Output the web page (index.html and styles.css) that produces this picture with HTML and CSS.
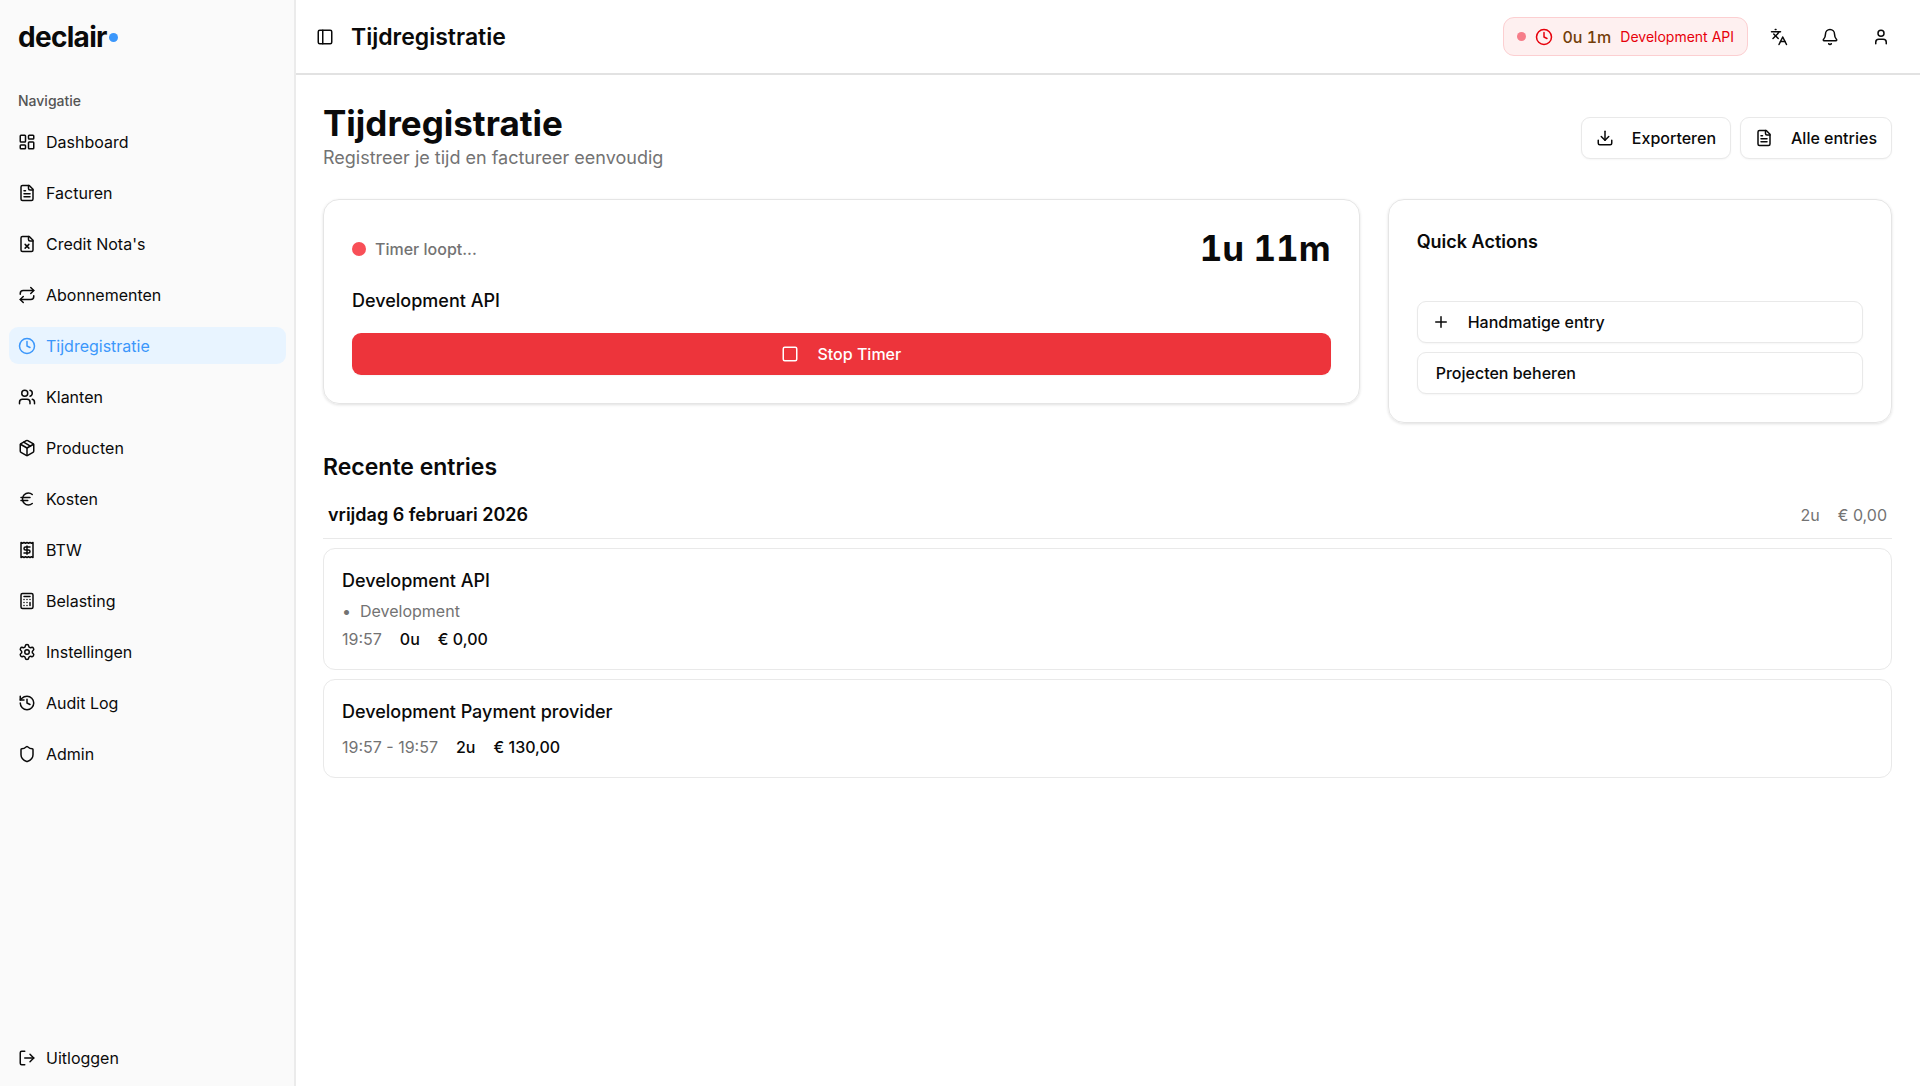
FILE: index.html
```html
<!DOCTYPE html>
<html lang="nl">
<head>
<meta charset="utf-8">
<meta name="viewport" content="width=device-width, initial-scale=1">
<title>Tijdregistratie - declair</title>
<link rel="stylesheet" href="styles.css">
</head>
<body>
<div class="app">
  <aside class="sidebar">
    <a class="logo" href="#">declair<span class="logo-dot"></span></a>
    <p class="nav-label">Navigatie</p>
    <nav class="nav" aria-label="Navigatie">
      <a class="nav-item" href="#"><svg class="icon" viewBox="0 0 24 24"><rect width="7" height="9" x="3" y="3" rx="1"/><rect width="7" height="5" x="14" y="3" rx="1"/><rect width="7" height="9" x="14" y="12" rx="1"/><rect width="7" height="5" x="3" y="16" rx="1"/></svg>Dashboard</a>
      <a class="nav-item" href="#"><svg class="icon" viewBox="0 0 24 24"><path d="M15 2H6a2 2 0 0 0-2 2v16a2 2 0 0 0 2 2h12a2 2 0 0 0 2-2V7Z"/><path d="M14 2v4a2 2 0 0 0 2 2h4"/><path d="M10 9H8"/><path d="M16 13H8"/><path d="M16 17H8"/></svg>Facturen</a>
      <a class="nav-item" href="#"><svg class="icon" viewBox="0 0 24 24"><path d="M15 2H6a2 2 0 0 0-2 2v16a2 2 0 0 0 2 2h12a2 2 0 0 0 2-2V7Z"/><path d="M14 2v4a2 2 0 0 0 2 2h4"/><path d="m14.500 12.500-5 5"/><path d="m9.500 12.500 5 5"/></svg>Credit Nota's</a>
      <a class="nav-item" href="#"><svg class="icon" viewBox="0 0 24 24"><path d="m17 2 4 4-4 4"/><path d="M3 11v-1a4 4 0 0 1 4-4h14"/><path d="m7 22-4-4 4-4"/><path d="M21 13v1a4 4 0 0 1-4 4H3"/></svg>Abonnementen</a>
      <a class="nav-item active" href="#" aria-current="page"><svg class="icon" viewBox="0 0 24 24"><circle cx="12" cy="12" r="10"/><path d="M12 6v6l4 2"/></svg>Tijdregistratie</a>
      <a class="nav-item" href="#"><svg class="icon" viewBox="0 0 24 24"><path d="M16 21v-2a4 4 0 0 0-4-4H6a4 4 0 0 0-4 4v2"/><circle cx="9" cy="7" r="4"/><path d="M22 21v-2a4 4 0 0 0-3-3.870"/><path d="M16 3.130a4 4 0 0 1 0 7.750"/></svg>Klanten</a>
      <a class="nav-item" href="#"><svg class="icon" viewBox="0 0 24 24"><path d="M11 21.730a2 2 0 0 0 2 0l7-4A2 2 0 0 0 21 16V8a2 2 0 0 0-1-1.730l-7-4a2 2 0 0 0-2 0l-7 4A2 2 0 0 0 3 8v8a2 2 0 0 0 1 1.730z"/><path d="M12 22V12"/><path d="M3.300 7 12 12l8.700-5"/><path d="m7.500 4.270 9 5.150"/></svg>Producten</a>
      <a class="nav-item" href="#"><svg class="icon" viewBox="0 0 24 24"><path d="M4 10h12"/><path d="M4 14h9"/><path d="M19 6a7.700 7.700 0 0 0-5.200-2A7.900 7.900 0 0 0 6 12c0 4.400 3.500 8 7.800 8 2 0 3.800-.8 5.200-2"/></svg>Kosten</a>
      <a class="nav-item" href="#"><svg class="icon" viewBox="0 0 24 24"><path d="M4 2v20l2-1 2 1 2-1 2 1 2-1 2 1 2-1 2 1V2l-2 1-2-1-2 1-2-1-2 1-2-1-2 1Z"/><path d="M16 8h-6a2 2 0 1 0 0 4h4a2 2 0 1 1 0 4H8"/><path d="M12 17.500v-11"/></svg>BTW</a>
      <a class="nav-item" href="#"><svg class="icon" viewBox="0 0 24 24"><rect width="16" height="20" x="4" y="2" rx="2"/><path d="M8 6h8M16 14v4M16 10h.01M12 10h.01M8 10h.01M12 14h.01M8 14h.01M12 18h.01M8 18h.01"/></svg>Belasting</a>
      <a class="nav-item" href="#"><svg class="icon" viewBox="0 0 24 24"><path d="M9.671 4.136a2.340 2.340 0 0 1 4.659 0 2.340 2.340 0 0 0 3.319 1.915 2.340 2.340 0 0 1 2.330 4.033 2.340 2.340 0 0 0 0 3.831 2.340 2.340 0 0 1-2.330 4.033 2.340 2.340 0 0 0-3.319 1.915 2.340 2.340 0 0 1-4.659 0 2.340 2.340 0 0 0-3.320-1.915 2.340 2.340 0 0 1-2.330-4.033 2.340 2.340 0 0 0 0-3.831A2.340 2.340 0 0 1 6.350 6.051a2.340 2.340 0 0 0 3.319-1.915"/><circle cx="12" cy="12" r="3"/></svg>Instellingen</a>
      <a class="nav-item" href="#"><svg class="icon" viewBox="0 0 24 24"><path d="M3 12a9 9 0 1 0 9-9 9.750 9.750 0 0 0-6.740 2.740L3 8"/><path d="M3 3v5h5"/><path d="M12 7v5l4 2"/></svg>Audit Log</a>
      <a class="nav-item" href="#"><svg class="icon" viewBox="0 0 24 24"><path d="M20 13c0 5-3.500 7.500-7.660 8.950a1 1 0 0 1-.67-.01C7.500 20.500 4 18 4 13V6a1 1 0 0 1 1-1c2 0 4.500-1.200 6.240-2.720a1.170 1.170 0 0 1 1.520 0C14.510 3.810 17 5 19 5a1 1 0 0 1 1 1z"/></svg>Admin</a>
    </nav>
    <button class="nav-item logout" type="button"><svg class="icon" viewBox="0 0 24 24"><path d="m16 17 5-5-5-5"/><path d="M21 12H9"/><path d="M9 21H5a2 2 0 0 1-2-2V5a2 2 0 0 1 2-2h4"/></svg>Uitloggen</button>
  </aside>

  <div class="page">
    <header class="topbar">
      <button class="icon-button toggle" type="button" aria-label="Zijbalk tonen of verbergen"><svg class="icon" viewBox="0 0 24 24"><rect width="18" height="18" x="3" y="3" rx="2"/><path d="M9 3v18"/></svg></button>
      <span class="topbar-title">Tijdregistratie</span>
      <div class="topbar-actions">
        <a class="timer-pill" href="#">
          <span class="pill-dot"></span>
          <svg class="icon" viewBox="0 0 24 24"><circle cx="12" cy="12" r="10"/><path d="M12 6v6l4 2"/></svg>
          <span class="pill-time">0u 1m</span>
          <span class="pill-name">Development API</span>
        </a>
        <button class="icon-button" type="button" aria-label="Taal"><svg class="icon" viewBox="0 0 24 24"><path d="m5 8 6 6"/><path d="m4 14 6-6 2-3"/><path d="M2 5h12"/><path d="M7 2h1"/><path d="m22 22-5-10-5 10"/><path d="M14 18h6"/></svg></button>
        <button class="icon-button" type="button" aria-label="Meldingen"><svg class="icon" viewBox="0 0 24 24"><path d="M10.268 21a2 2 0 0 0 3.464 0"/><path d="M3.262 15.326A1 1 0 0 0 4 17h16a1 1 0 0 0 .740-1.673C19.410 13.956 18 12.499 18 8A6 6 0 0 0 6 8c0 4.499-1.411 5.956-2.738 7.326"/></svg></button>
        <button class="icon-button" type="button" aria-label="Account"><svg class="icon" viewBox="0 0 24 24"><path d="M19 21v-2a4 4 0 0 0-4-4H9a4 4 0 0 0-4 4v2"/><circle cx="12" cy="7" r="4"/></svg></button>
      </div>
    </header>

    <main class="content">
      <div class="heading">
        <div>
          <h1>Tijdregistratie</h1>
          <p class="subtitle">Registreer je tijd en factureer eenvoudig</p>
        </div>
        <div class="heading-actions">
          <button class="button" type="button"><svg class="icon" viewBox="0 0 24 24"><path d="M12 15V3"/><path d="M21 15v4a2 2 0 0 1-2 2H5a2 2 0 0 1-2-2v-4"/><path d="m7 10 5 5 5-5"/></svg>Exporteren</button>
          <button class="button" type="button"><svg class="icon" viewBox="0 0 24 24"><path d="M15 2H6a2 2 0 0 0-2 2v16a2 2 0 0 0 2 2h12a2 2 0 0 0 2-2V7Z"/><path d="M14 2v4a2 2 0 0 0 2 2h4"/><path d="M10 9H8"/><path d="M16 13H8"/><path d="M16 17H8"/></svg>Alle entries</button>
        </div>
      </div>

      <div class="cards">
        <section class="card timer-card">
          <div class="timer-head">
            <span class="timer-status"><span class="status-dot"></span>Timer loopt...</span>
            <span class="timer-value">1u 11m</span>
          </div>
          <p class="timer-project">Development API</p>
          <button class="button stop" type="button"><svg class="icon" viewBox="0 0 24 24"><rect width="18" height="18" x="3" y="3" rx="2"/></svg>Stop Timer</button>
        </section>
        <section class="card quick-card">
          <h2 class="card-title">Quick Actions</h2>
          <div class="quick-list">
            <button class="button" type="button"><svg class="icon" viewBox="0 0 24 24"><path d="M5 12h14"/><path d="M12 5v14"/></svg>Handmatige entry</button>
            <a class="button text-only" href="#">Projecten beheren</a>
          </div>
        </section>
      </div>

      <section class="recent">
        <h2 class="section-title">Recente entries</h2>
        <div class="day-head">
          <h3>vrijdag 6 februari 2026</h3>
          <div class="day-totals"><span>2u</span><span>€ 0,00</span></div>
        </div>
        <article class="entry">
          <h4>Development API</h4>
          <p class="entry-tag"><span>•</span><span>Development</span></p>
          <p class="entry-meta"><span class="muted">19:57</span><span>0u</span><span>€ 0,00</span></p>
        </article>
        <article class="entry">
          <h4>Development Payment provider</h4>
          <p class="entry-meta spaced"><span class="muted">19:57 - 19:57</span><span>2u</span><span>€ 130,00</span></p>
        </article>
      </section>
    </main>
  </div>
</div>
</body>
</html>
```
FILE: styles.css
```css
* {
  box-sizing: border-box;
}

body {
  margin: 0;
  background: #fff;
  color: #0a0a0a;
  font-family: Inter, "Liberation Sans", sans-serif;
  font-size: 16px;
  line-height: 24px;
}

h1, h2, h3, h4, p {
  margin: 0;
}

a {
  color: inherit;
  text-decoration: none;
}

button {
  font: inherit;
  color: inherit;
  background: none;
  border: 0;
  cursor: pointer;
}

.icon {
  width: 18px;
  height: 18px;
  flex: none;
  fill: none;
  stroke: currentColor;
  stroke-width: 2;
  stroke-linecap: round;
  stroke-linejoin: round;
}

.app {
  display: flex;
  min-height: 100vh;
}

/* Sidebar */
.sidebar {
  position: sticky;
  top: 0;
  flex: none;
  display: flex;
  flex-direction: column;
  width: 296px;
  height: 100vh;
  padding: 19px 8px 10px 9px;
  background: #fafafa;
  border-right: 2px solid #ebebeb;
}

.logo {
  display: flex;
  align-items: center;
  gap: 2px;
  padding: 0 9px;
  font-size: 28px;
  line-height: 37px;
  font-weight: 700;
  letter-spacing: -0.025em;
}

.logo-dot {
  width: 9px;
  height: 9px;
  border-radius: 50%;
  background: #3b97fb;
}

.nav-label {
  margin-top: 27px;
  padding: 0 9px;
  font-size: 14px;
  line-height: 36px;
  font-weight: 500;
  color: #545454;
}

.nav {
  display: flex;
  flex-direction: column;
  gap: 14px;
  margin-top: 4px;
}

.nav-item {
  display: flex;
  align-items: center;
  gap: 10px;
  height: 37px;
  padding: 0 9px;
  border-radius: 9px;
  text-align: left;
}

.nav-item.active {
  background: #e8f4ff;
  color: #3b97fb;
}

.logout {
  margin-top: auto;
}

/* Top bar */
.page {
  flex: 1;
  min-width: 0;
}

.topbar {
  display: flex;
  align-items: center;
  height: 75px;
  padding: 0 21px 0 10px;
  border-bottom: 2px solid #e2e2e2;
}

.icon-button {
  display: flex;
  align-items: center;
  justify-content: center;
  width: 37px;
  height: 37px;
  padding: 0;
  border-radius: 9px;
}

.topbar-title {
  margin-left: 8px;
  font-size: 23px;
  line-height: 32px;
  font-weight: 600;
}

.topbar-actions {
  display: flex;
  align-items: center;
  gap: 14px;
  margin-left: auto;
}

.timer-pill {
  display: flex;
  align-items: center;
  gap: 9px;
  height: 39px;
  margin-right: -2px;
  padding: 0 13px;
  border: 1px solid #fccfd1;
  border-radius: 11px;
  background: #fef0f0;
  color: #e7000b;
}

.pill-dot {
  width: 9px;
  height: 9px;
  border-radius: 50%;
  background: #f67d89;
}

.pill-time {
  font-weight: 500;
  font-variant-numeric: tabular-nums;
  color: #733e0a;
}

.pill-name {
  font-size: 14px;
}

/* Page heading */
.content {
  padding: 28px 28px 28px 27px;
}

.heading {
  display: flex;
  align-items: center;
  justify-content: space-between;
}

h1 {
  font-size: 35px;
  line-height: 41px;
  font-weight: 700;
}

.subtitle {
  font-size: 18px;
  line-height: 28px;
  color: #737373;
}

.heading-actions {
  display: flex;
  gap: 9px;
}

.button {
  display: flex;
  align-items: center;
  gap: 18px;
  height: 42px;
  padding: 0 14px;
  border: 1px solid #e9e9e9;
  border-radius: 9px;
  background: #fff;
  box-shadow: 0 1px 2px rgba(0, 0, 0, 0.04);
  font-weight: 500;
}

/* Cards */
.cards {
  display: grid;
  grid-template-columns: repeat(3, minmax(0, 1fr));
  align-items: start;
  gap: 28px;
  margin-top: 27px;
}

.card {
  padding: 28px;
  border: 1px solid #e5e5e5;
  border-radius: 16px;
  box-shadow: 0 1px 3px rgba(0, 0, 0, 0.12);
}

.timer-card {
  grid-column: span 2;
}

.timer-head {
  display: flex;
  align-items: center;
  justify-content: space-between;
}

.timer-status {
  display: flex;
  align-items: center;
  gap: 9px;
  font-weight: 500;
  color: #737373;
}

.status-dot {
  width: 14px;
  height: 14px;
  border-radius: 50%;
  background: #f84f57;
}

.timer-value {
  font-size: 35px;
  line-height: 41px;
  font-weight: 700;
  font-variant-numeric: tabular-nums;
}

.timer-project {
  margin-top: 18px;
  font-size: 18px;
  line-height: 28px;
  font-weight: 500;
}

.stop {
  justify-content: center;
  width: 100%;
  margin-top: 18px;
  border: 0;
  background: #ed343b;
  color: #fff;
}

.card-title {
  font-size: 18px;
  line-height: 28px;
  font-weight: 600;
}

.quick-list {
  display: flex;
  flex-direction: column;
  gap: 9px;
  margin-top: 45px;
}

.text-only {
  padding: 0 18px;
}

/* Recent entries */
.recent {
  margin-top: 28px;
}

.section-title {
  font-size: 23px;
  line-height: 32px;
  font-weight: 600;
}

.day-head {
  display: flex;
  align-items: center;
  justify-content: space-between;
  margin-top: 9px;
  padding: 9px 5px;
  border-bottom: 1px solid #e9e9e9;
}

.day-head h3 {
  font-size: 18px;
  line-height: 28px;
  font-weight: 600;
}

.day-totals {
  display: flex;
  gap: 18px;
  color: #737373;
}

.entry {
  margin-top: 9px;
  padding: 18px;
  border: 1px solid #e9e9e9;
  border-radius: 12px;
}

.entry h4 {
  font-size: 18px;
  line-height: 28px;
  font-weight: 500;
}

.entry-tag {
  display: flex;
  gap: 9px;
  margin-top: 4px;
  color: #737373;
}

.entry-meta {
  display: flex;
  gap: 18px;
  margin-top: 4px;
  font-weight: 500;
}

.entry-meta.spaced {
  margin-top: 9px;
}

.muted {
  font-weight: 400;
  color: #737373;
}
```
